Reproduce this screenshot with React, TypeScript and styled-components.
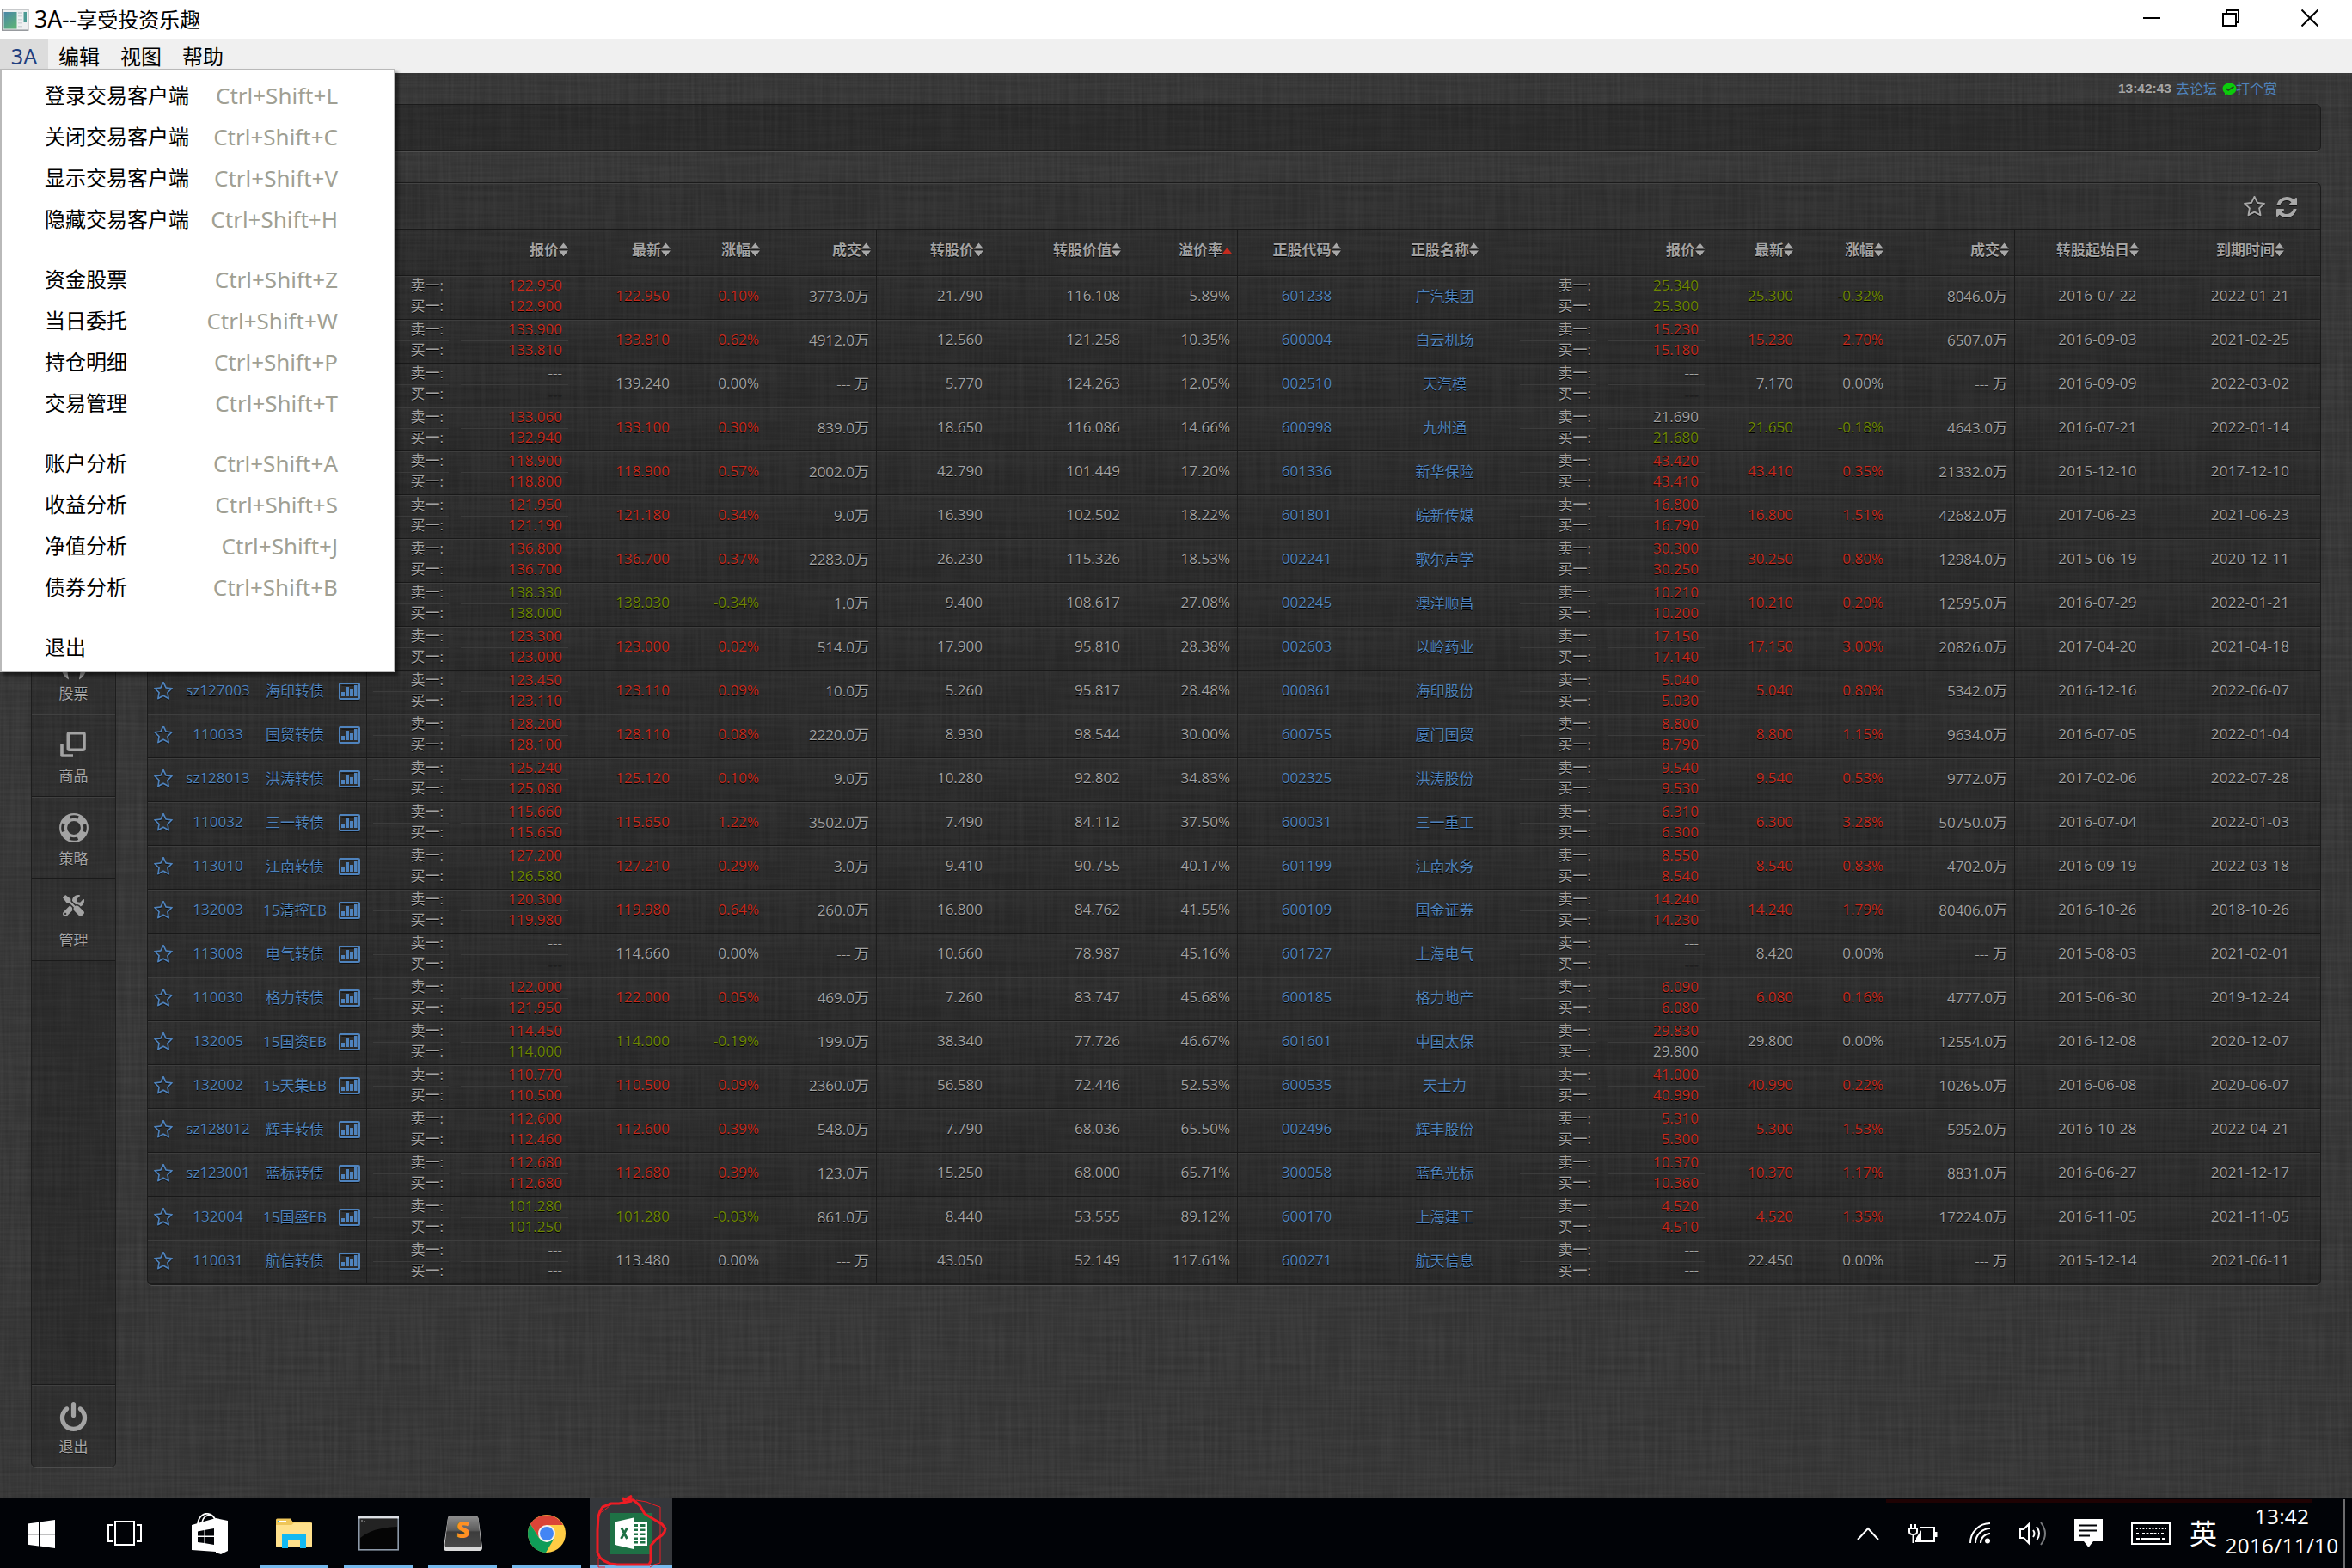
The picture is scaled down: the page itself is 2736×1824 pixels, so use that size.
import React from "react";
import styled, { createGlobalStyle, css } from "styled-components";
import { FaTools } from "react-icons/fa";

const UI = `"Noto Sans", "Noto Sans CJK SC", sans-serif`;
const DATA = `"Open Sans", "Noto Sans CJK SC", sans-serif`;

const RED = "#c42b1e";
const GREEN = "#6e8703";
const GREY = "#a2a2a2";
const BLUE = "#4f83bd";

const weave = (fx: string, fy: string, seed: number) =>
  `url("data:image/svg+xml,${encodeURIComponent(
    `<svg xmlns='http://www.w3.org/2000/svg' width='512' height='512'><filter id='n' x='0' y='0' width='100%' height='100%'><feTurbulence type='fractalNoise' baseFrequency='${fx} ${fy}' numOctaves='2' seed='${seed}' stitchTiles='stitch'/><feColorMatrix values='0 0 0 0 1  0 0 0 0 1  0 0 0 0 1  0.075 0 0 0 -0.022'/></filter><rect width='512' height='512' filter='url(#n)'/></svg>`
  )}")`;

const GlobalStyle = createGlobalStyle`
  * { box-sizing: border-box; }
  html, body { margin: 0; padding: 0; background: #000; }
`;

const Screen = styled.div`
  position: relative;
  display: flex;
  flex-direction: column;
  width: 2736px;
  height: 1824px;
  overflow: hidden;
  font-family: ${UI};
`;

/* ---------- window frame ---------- */

const TitleBar = styled.header`
  display: flex;
  align-items: center;
  justify-content: space-between;
  height: 45px;
  padding: 0 3px 0 2px;
  background: #fff;
  color: #000;
`;

const TitleGroup = styled.div`
  display: flex;
  align-items: center;
  gap: 6px;
  font-size: 24px;
  line-height: 45px;
`;

const TitleText = styled.span`
  white-space: nowrap;
`;

const TitleLatin = styled.span`
  font-size: 26.5px;
`;

const WindowButtons = styled.div`
  display: flex;
  height: 45px;
`;

const WindowButton = styled.div`
  display: flex;
  justify-content: center;
  width: 92px;
  padding-top: 11px;
`;

const MenuBar = styled.nav`
  display: flex;
  height: 40px;
  background: #f0f0f0;
`;

const MenuHead = styled.div<{ $active?: boolean; $w: number }>`
  width: ${(p) => p.$w}px;
  height: 35px;
  text-align: center;
  font-size: ${(p) => (p.$active ? 25 : 24)}px;
  line-height: 41px;
  color: ${(p) => (p.$active ? "#1f3f80" : "#000")};
  background: ${(p) => (p.$active ? "#dcdcdc" : "transparent")};
`;

const Dropdown = styled.div`
  position: absolute;
  left: 0;
  top: 80px;
  z-index: 5;
  width: 460px;
  height: 702px;
  padding: 6px 0 0;
  background: #fff;
  border: 2px solid #b9b9b9;
  box-shadow: 3px 4px 4px rgba(0, 0, 0, 0.5);
`;

const DropItem = styled.div`
  display: flex;
  justify-content: space-between;
  align-items: center;
  height: 48px;
  padding: 0 65px 2px 50px;
  font-size: 24px;
  line-height: 46px;
  color: #000;
`;

const Shortcut = styled.span`
  color: #a09f93;
  font-size: 26px;
`;

const DropRule = styled.div`
  height: 22px;
  padding-top: 8px;
  &::after {
    content: "";
    display: block;
    height: 1px;
    background: #dedede;
  }
`;

/* ---------- client area ---------- */

const Client = styled.div`
  display: flex;
  height: 1658px;
  background-color: #323232;
  background-image: ${weave("0.3", "0.01", 3)}, ${weave("0.01", "0.3", 8)};
`;

const SideColumn = styled.aside`
  display: flex;
  width: 171px;
  padding: 36px 36px 36px 36px;
`;

const SideBar = styled.div`
  display: flex;
  flex-direction: column;
  width: 99px;
  height: 1586px;
  background: rgba(0, 0, 0, 0.2);
  border: 1px solid #1d1d1d;
  border-radius: 6px;
  box-shadow: 0 2px 0 -1px #4c4c4c;
`;

const SideFill = styled.div<{ $h?: number }>`
  ${(p) => (p.$h ? `height: ${p.$h}px;` : "flex: 1;")}
`;

const SideCell = styled.div<{ $top?: boolean }>`
  display: flex;
  flex-direction: column;
  align-items: center;
  height: 95.75px;
  border-bottom: 1px solid #1a1a1a;
  ${(p) => p.$top && "border-bottom: 0; border-top: 1px solid #1a1a1a;"}
  box-shadow: inset 0 2px 0 -1px #414141;
  background: rgba(255, 255, 255, 0.015);
  color: #a6a6a6;
  font-size: 17px;
  line-height: 22px;
  text-shadow: 0 1px 0 #111;
`;

const SideIcon = styled.div`
  display: flex;
  align-items: center;
  justify-content: center;
  height: 60px;
  margin: 6px 0 -5px;
  color: #a3a3a3;
`;

const Main = styled.main`
  display: flex;
  flex-direction: column;
  width: 2529px;
`;

const TopLinks = styled.div`
  display: flex;
  align-items: center;
  justify-content: flex-end;
  height: 36px;
  padding: 0 51px 1px 0;
  color: #a5a5a5;
  font: 16px/35px "Liberation Sans", "Noto Sans CJK SC", sans-serif;
`;

const ClockText = styled.b`
  margin-right: 5px;
  font-size: 15.5px;
`;

const TopLink = styled.a`
  color: ${BLUE};
  font-size: 16px;
  font-family: "Noto Sans CJK SC", sans-serif;
`;

const Badge = styled.span`
  display: flex;
  margin: 1px -1px 0 6px;
`;

const panel = css`
  border: 1px solid #1b1b1b;
  box-shadow: 0 2px 0 -1px #4f4f4f;
`;

const BlankPanel = styled.section`
  ${panel}
  height: 55px;
  margin-bottom: 36px;
  border-radius: 6px;
  background: rgba(0, 0, 0, 0.22);
`;

const TablePanel = styled.section`
  ${panel}
  height: 1283px;
  border-radius: 6px;
  border-bottom-width: 2px;
  background: rgba(0, 0, 0, 0.1);
  overflow: hidden;
`;

const PanelTools = styled.div`
  display: flex;
  align-items: center;
  justify-content: flex-end;
  gap: 13px;
  height: 53px;
  padding: 2px 27px 0 0;
  box-shadow: inset 0 2px 0 -1px #444;
`;

const COLS =
  "35px 93px 86px 41px 102px 140px 118px 104px 129px 131px 160px 129px 160px 161px 103px 127px 103px 105px 145px 192px 163px";

const row = css`
  display: grid;
  grid-template-columns: ${COLS};
  border-top: 1px solid #181818;
  box-shadow: inset 0 2px 0 -1px #3e3e3e;
  font-family: ${DATA};
  font-size: 17px;
  color: ${GREY};
  text-shadow: 0 1px 0 #000;
`;

const HeadRow = styled.div`
  ${row}
  height: 54px;
  font-weight: 700;
  background: linear-gradient(rgba(0, 0, 0, 0.05), rgba(0, 0, 0, 0.13));
`;

const BodyRow = styled.div`
  ${row}
  height: 51px;
  background: linear-gradient(rgba(0, 0, 0, 0.05), rgba(0, 0, 0, 0.14) 70%);
`;

const Cell = styled.div<{
  $align?: "center";
  $edge?: boolean;
  $c?: string;
  $pad?: number;
  $drop?: number;
  $track?: number;
}>`
  display: flex;
  align-items: center;
  justify-content: ${(p) => p.$align || "flex-end"};
  padding: 0 ${(p) => (p.$align ? 0 : p.$pad ?? 8)}px ${(p) => p.$drop ?? 6}px 0;
  border-right: ${(p) => (p.$edge ? "1px solid #1b1b1b" : "0")};
  color: ${(p) => p.$c || "inherit"};
  letter-spacing: ${(p) => p.$track || 0}px;
  white-space: pre;
`;

const Pair = styled.div<{ $label?: boolean }>`
  display: flex;
  flex-direction: column;
  margin-right: 8px;
  margin-left: 7px;
  ${(p) => p.$label && "margin-right: 7px;"}
`;

const PairLine = styled.div<{ $c?: string; $label?: boolean }>`
  height: 24px;
  line-height: 21px;
  text-align: right;
  padding-right: ${(p) => (p.$label ? 6 : 7)}px;
  color: ${(p) => p.$c || "inherit"};
  & + & {
    line-height: 19px;
    border-top: 1px solid #3c3c3c;
  }
`;

const SortGlyph = styled.svg`
  margin-top: 2px;
  filter: drop-shadow(0 1px 0 #111);
`;

/* ---------- taskbar ---------- */

const TaskBar = styled.footer`
  display: flex;
  justify-content: space-between;
  height: 81px;
  background: #010307;
  color: #fff;
`;

const TaskGroup = styled.div`
  display: flex;
`;

const TaskSlot = styled.div<{ $w?: number; $run?: boolean; $front?: boolean }>`
  position: relative;
  display: flex;
  align-items: center;
  justify-content: center;
  width: ${(p) => p.$w || 98}px;
  height: 81px;
  ${(p) => p.$front && "margin: 0 1px; width: 96px; background: #35373b;"}
  &::after {
    content: "";
    display: ${(p) => (p.$run || p.$front ? "block" : "none")};
    position: absolute;
    bottom: 0;
    left: ${(p) => (p.$front ? 0 : 9)}px;
    right: ${(p) => (p.$front ? 0 : 9)}px;
    height: 4px;
    background: #76b9ed;
  }
`;

const Tray = styled.div`
  position: relative;
  display: flex;
  align-items: center;
  padding-right: 8px;
  &::before {
    content: "";
    position: absolute;
    top: 1px;
    left: 34px;
    width: 496px;
    height: 4px;
    background: #1e0203;
  }
`;

const TrayIcon = styled.div<{ $ml: number }>`
  display: flex;
  margin-left: ${(p) => p.$ml}px;
`;

const Ime = styled.span`
  margin: 0 0 4px 22px;
  font: 32px/40px "Noto Sans CJK SC", sans-serif;
`;

const TrayClock = styled.div`
  display: flex;
  flex-direction: column;
  width: 139px;
  margin: 0 2px 6px 6px;
  text-align: center;
  font: 24.3px/34px "Open Sans", sans-serif;
  letter-spacing: 0.3px;
`;

const TrayEdge = styled.div`
  align-self: stretch;
  width: 2px;
  margin-top: 1px;
  background: #6c6c6e;
`;

const Scribble = styled.svg`
  position: absolute;
  left: 686px;
  top: 1736px;
  z-index: 4;
`;

/* ---------- icons ---------- */

const Star = ({ size = 22, color = BLUE, dy = 0 }: { size?: number; color?: string; dy?: number }) => (
  <svg width={size} height={size} viewBox="64 64 1664 1664" style={{ marginTop: dy, filter: "drop-shadow(0 1px 0 #111)" }}>
    <path
      fill={color}
      d="M1201 1004l306-297-422-62-189-382-189 382-422 62 306 297-73 421 378-199 377 199zm527-357q0 22-26 48l-363 354 86 500q1 7 1 20 0 50-41 50-19 0-40-12l-449-236-449 236q-22 12-40 12-21 0-31.5-14.5t-10.5-35.5q0-6 2-20l86-500-364-354q-25-27-25-48 0-37 56-46l502-73 225-455q19-41 49-41t49 41l225 455 502 73q56 9 56 46z"
    />
  </svg>
);

const Refresh = () => (
  <svg width="24" height="24" viewBox="128 128 1536 1536" style={{ filter: "drop-shadow(0 1px 0 #111)" }}>
    <path
      fill="#a8a8a8"
      d="M1639 1056q0 5-1 7-64 268-268 434.5t-478 166.5q-146 0-282.5-55t-243.5-157l-129 129q-19 19-45 19t-45-19-19-45v-448q0-26 19-45t45-19h448q26 0 45 19t19 45-19 45l-137 137q71 66 161 102t187 36q134 0 250-65t186-179q11-17 53-117 8-23 30-23h192q13 0 22.5 9.5t9.5 22.5zm25-800v448q0 26-19 45t-45 19h-448q-26 0-45-19t-19-45 19-45l138-138q-148-137-349-137-134 0-250 65t-186 179q-11 17-53 117-8 23-30 23h-199q-13 0-22.5-9.5t-9.5-22.5v-7q65-268 270-434.5t480-166.5q146 0 284 55.5t245 156.5l130-129q19-19 45-19t45 19 19 45z"
    />
  </svg>
);

const Power = () => (
  <svg width="33" height="34" viewBox="128 0 1536 1664" style={{ marginTop: 2 }}>
    <path
      fill="#a3a3a3"
      d="M1664 896q0 156-61 298t-164 245-245 164-298 61-298-61-245-164-164-245-61-298q0-182 80.5-343t226.5-270q43-32 95.5-25t83.5 50q32 42 24.5 94.5t-49.5 84.5q-98 74-151.5 181t-53.5 228q0 104 40.5 198.5t109.5 163.5 163.5 109.5 198.5 40.5 198.5-40.5 163.5-109.5 109.5-163.5 40.5-198.5q0-121-53.5-228t-151.5-181q-42-32-49.5-84.5t24.5-94.5q31-43 84-50t95 25q146 109 226.5 270t80.5 343zm-640-768v640q0 52-38 90t-90 38-90-38-38-90v-640q0-52 38-90t90-38 90 38 38 90z"
    />
  </svg>
);

const ChartIcon = () => (
  <svg width="25" height="21" viewBox="0 0 25 21" style={{ marginTop: 4 }}>
    <path d="M1 20.5h23M3.5 3.2h18" stroke="#111" />
    <rect x="1" y="1" width="23" height="18" rx="1" fill="none" stroke={BLUE} strokeWidth="2" />
    <path d="M3 11h4v5H3zM8 5h4v11H8zM13 8h4v8h-4zM18 3h3.5v13H18z" fill={BLUE} />
  </svg>
);

const LifeRing = () => (
  <svg width="34" height="34" viewBox="0 0 34 34">
    <circle cx="17" cy="17" r="12.4" fill="none" stroke="#a3a3a3" strokeWidth="9" />
    <circle
      cx="17"
      cy="17"
      r="13"
      fill="none"
      stroke="#2d2d2d"
      strokeWidth="3.6"
      strokeDasharray="9.4 11.02"
      strokeDashoffset="4.7"
    />
  </svg>
);

const Layers = () => (
  <svg width="31" height="31" viewBox="0 0 31 31" fill="none" stroke="#a3a3a3" strokeWidth="3.6" strokeLinejoin="round">
    <rect x="9.3" y="1.8" width="18.7" height="19.5" rx="1.5" />
    <path d="M2 14.5V28H15" />
  </svg>
);

const StockGlyph = () => (
  <svg width="32" height="34" viewBox="0 0 32 34" style={{ marginTop: 5 }}>
    <path d="M1 14C1 24 3 29 10 33.500C9 28 8 24 8 14zM31 14C31 24 29 29 22 33.500C23 28 24 24 24 14z" fill="#a3a3a3" />
  </svg>
);

const Sort = ({ up }: { up?: boolean }) => (
  <SortGlyph width="11" height="17" viewBox="0 0 11 17">
    {up ? (
      <path d="M5.500 6L11 13H0z" fill={RED} />
    ) : (
      <path d="M5.500 0.500L11 7.500H0zM5.500 16.500L0 9.500H11z" fill="#a8a8a8" />
    )}
  </SortGlyph>
);

const AppIcon = () => (
  <svg width="32" height="26" viewBox="0 0 32 26">
    <defs>
      <linearGradient id="app" x1="0" y1="0" x2="0.6" y2="1">
        <stop offset="0" stopColor="#4a86a8" />
        <stop offset="1" stopColor="#5cb07a" />
      </linearGradient>
    </defs>
    <rect x="0.700" y="0.700" width="30" height="24.500" fill="#eef0f1" stroke="#8c9094" strokeWidth="1.400" />
    <rect x="2.500" y="4" width="15" height="19.500" fill="url(#app)" />
    <path d="M19 4h5v2h-5zM19 8h5v1.500h-5zM19 12h5v1.500h-5zM19 16h5v1.500h-5zM19 20h5v1.500h-5z" fill="#cfd4d8" />
    <rect x="25.500" y="4" width="3.500" height="12" fill="#4b9a93" />
  </svg>
);

/* ---------- data: leading r / g marks a rising or falling figure ---------- */

const ROWS = `
|||r122.950|r122.900|r122.950|r0.10%|3773.0|21.790|116.108|5.89%|601238|广汽集团|g25.340|g25.300|g25.300|g-0.32%|8046.0|2016-07-22|2022-01-21
|||r133.900|r133.810|r133.810|r0.62%|4912.0|12.560|121.258|10.35%|600004|白云机场|r15.230|r15.180|r15.230|r2.70%|6507.0|2016-09-03|2021-02-25
|||---|---|139.240|0.00%|--- |5.770|124.263|12.05%|002510|天汽模|---|---|7.170|0.00%|--- |2016-09-09|2022-03-02
|||r133.060|r132.940|r133.100|r0.30%|839.0|18.650|116.086|14.66%|600998|九州通|21.690|g21.680|g21.650|g-0.18%|4643.0|2016-07-21|2022-01-14
|||r118.900|r118.800|r118.900|r0.57%|2002.0|42.790|101.449|17.20%|601336|新华保险|r43.420|r43.410|r43.410|r0.35%|21332.0|2015-12-10|2017-12-10
|||r121.950|r121.190|r121.180|r0.34%|9.0|16.390|102.502|18.22%|601801|皖新传媒|r16.800|r16.790|r16.800|r1.51%|42682.0|2017-06-23|2021-06-23
|||r136.800|r136.700|r136.700|r0.37%|2283.0|26.230|115.326|18.53%|002241|歌尔声学|r30.300|r30.250|r30.250|r0.80%|12984.0|2015-06-19|2020-12-11
|||g138.330|g138.000|g138.030|g-0.34%|1.0|9.400|108.617|27.08%|002245|澳洋顺昌|r10.210|r10.200|r10.210|r0.20%|12595.0|2016-07-29|2022-01-21
|||r123.300|r123.000|r123.000|r0.02%|514.0|17.900|95.810|28.38%|002603|以岭药业|r17.150|r17.140|r17.150|r3.00%|20826.0|2017-04-20|2021-04-18
|sz127003|海印转债|r123.450|r123.110|r123.110|r0.09%|10.0|5.260|95.817|28.48%|000861|海印股份|r5.040|r5.030|r5.040|r0.80%|5342.0|2016-12-16|2022-06-07
|110033|国贸转债|r128.200|r128.100|r128.110|r0.08%|2220.0|8.930|98.544|30.00%|600755|厦门国贸|r8.800|r8.790|r8.800|r1.15%|9634.0|2016-07-05|2022-01-04
|sz128013|洪涛转债|r125.240|r125.080|r125.120|r0.10%|9.0|10.280|92.802|34.83%|002325|洪涛股份|r9.540|r9.530|r9.540|r0.53%|9772.0|2017-02-06|2022-07-28
|110032|三一转债|r115.660|r115.650|r115.650|r1.22%|3502.0|7.490|84.112|37.50%|600031|三一重工|r6.310|r6.300|r6.300|r3.28%|50750.0|2016-07-04|2022-01-03
|113010|江南转债|r127.200|g126.580|r127.210|r0.29%|3.0|9.410|90.755|40.17%|601199|江南水务|r8.550|r8.540|r8.540|r0.83%|4702.0|2016-09-19|2022-03-18
|132003|15清控EB|r120.300|r119.980|r119.980|r0.64%|260.0|16.800|84.762|41.55%|600109|国金证券|r14.240|r14.230|r14.240|r1.79%|80406.0|2016-10-26|2018-10-26
|113008|电气转债|---|---|114.660|0.00%|--- |10.660|78.987|45.16%|601727|上海电气|---|---|8.420|0.00%|--- |2015-08-03|2021-02-01
|110030|格力转债|r122.000|r121.950|r122.000|r0.05%|469.0|7.260|83.747|45.68%|600185|格力地产|r6.090|r6.080|r6.080|r0.16%|4777.0|2015-06-30|2019-12-24
|132005|15国资EB|r114.450|g114.000|g114.000|g-0.19%|199.0|38.340|77.726|46.67%|601601|中国太保|r29.830|29.800|29.800|0.00%|12554.0|2016-12-08|2020-12-07
|132002|15天集EB|r110.770|r110.500|r110.500|r0.09%|2360.0|56.580|72.446|52.53%|600535|天士力|r41.000|r40.990|r40.990|r0.22%|10265.0|2016-06-08|2020-06-07
|sz128012|辉丰转债|r112.600|r112.460|r112.600|r0.39%|548.0|7.790|68.036|65.50%|002496|辉丰股份|r5.310|r5.300|r5.300|r1.53%|5952.0|2016-10-28|2022-04-21
|sz123001|蓝标转债|r112.680|r112.680|r112.680|r0.39%|123.0|15.250|68.000|65.71%|300058|蓝色光标|r10.370|r10.360|r10.370|r1.17%|8831.0|2016-06-27|2021-12-17
|132004|15国盛EB|g101.280|g101.250|g101.280|g-0.03%|861.0|8.440|53.555|89.12%|600170|上海建工|r4.520|r4.510|r4.520|r1.35%|17224.0|2016-11-05|2021-11-05
|110031|航信转债|---|---|113.480|0.00%|--- |43.050|52.149|117.61%|600271|航天信息|---|---|22.450|0.00%|--- |2015-12-14|2021-06-11`
  .trim()
  .split("\n")
  .map((l) => l.split("|").slice(1));

const tone = (s: string) => (s[0] === "r" ? RED : s[0] === "g" ? GREEN : GREY);
const bare = (s: string) => s.replace(/^[rg]/, "");

const Quote = ({ ask, bid }: { ask: string; bid: string }) => (
  <>
    <Pair $label>
      <PairLine $label>卖一:</PairLine>
      <PairLine $label>买一:</PairLine>
    </Pair>
    <Pair>
      <PairLine $c={tone(ask)}>{bare(ask)}</PairLine>
      <PairLine $c={tone(bid)}>{bare(bid)}</PairLine>
    </Pair>
  </>
);

const BondRow = ({ d }: { d: string[] }) => (
  <BodyRow>
    <Cell $align="center">
      <Star dy={3} />
    </Cell>
    <Cell $align="center" $c={BLUE}>
      {d[0]}
    </Cell>
    <Cell $align="center" $c={BLUE}>
      {d[1]}
    </Cell>
    <Cell $align="center" $edge>
      <ChartIcon />
    </Cell>
    <Quote ask={d[2]} bid={d[3]} />
    <Cell $c={tone(d[4])}>{bare(d[4])}</Cell>
    <Cell $c={tone(d[5])}>{bare(d[5])}</Cell>
    <Cell $edge $pad={8}>{d[6]}万</Cell>
    <Cell>{d[7]}</Cell>
    <Cell>{d[8]}</Cell>
    <Cell $edge $pad={8}>{d[9]}</Cell>
    <Cell $align="center" $c={BLUE}>
      {d[10]}
    </Cell>
    <Cell $align="center" $c={BLUE}>
      {d[11]}
    </Cell>
    <Quote ask={d[12]} bid={d[13]} />
    <Cell $c={tone(d[14])}>{bare(d[14])}</Cell>
    <Cell $c={tone(d[15])}>{bare(d[15])}</Cell>
    <Cell $edge $pad={8}>{d[16]}万</Cell>
    <Cell $align="center" $track={0.3}>
      {d[17]}
    </Cell>
    <Cell $align="center" $track={0.3}>
      {d[18]}
    </Cell>
  </BodyRow>
);

const Head = ({ t, ...rest }: { t: string; $align?: "center"; $edge?: boolean; $pad?: number }) => (
  <Cell {...rest} $drop={8}>
    {t}
    <Sort up={t === "溢价率"} />
  </Cell>
);

const MENU: (string[] | null)[] = [
  ["登录交易客户端", "L"],
  ["关闭交易客户端", "C"],
  ["显示交易客户端", "V"],
  ["隐藏交易客户端", "H"],
  null,
  ["资金股票", "Z"],
  ["当日委托", "W"],
  ["持仓明细", "P"],
  ["交易管理", "T"],
  null,
  ["账户分析", "A"],
  ["收益分析", "S"],
  ["净值分析", "J"],
  ["债券分析", "B"],
  null,
  ["退出", ""],
];

const TaskIcons = () => (
  <TaskGroup>
    <TaskSlot $w={96}>
      <svg width="32" height="33" viewBox="0 0 32 33" style={{ marginTop: 2 }}>
        <path d="M0 4.500L13 2.700V16H0zM14.200 2.500L32 0v16H14.200zM0 17.200H13V30.500L0 28.700zM14.200 17.200H32V33L14.200 30.600z" fill="#fff" />
      </svg>
    </TaskSlot>
    <TaskSlot $w={98}>
      <svg width="40" height="29" viewBox="0 0 40 29" fill="none" stroke="#fff" strokeWidth="2">
        <path d="M9 1H31V28H9zM6 5H1V24H6M34 5H39V24H34" />
      </svg>
    </TaskSlot>
    <TaskSlot $w={99}>
      <svg width="42" height="48" viewBox="0 0 42 48">
        <path d="M7 13C8 3 15 0 19 1C25 2 27 6 28 10M12 12C13 4 18 2 22 3" fill="none" stroke="#fff" strokeWidth="1.800" />
        <path d="M0 14L28 6V45L0 43zM28 6L42 9V44L34 48L28 46z" fill="#fff" />
        <path d="M7 21.500L14.500 20v6.500H7zM16 19.800L26 18v8.500H16zM7 28h7.500v7L7 34zM16 28h10v9l-10-1.700z" fill="#010307" />
      </svg>
    </TaskSlot>
    <TaskSlot $run>
      <svg width="42" height="36" viewBox="0 0 42 36">
        <path d="M0 2Q0 0.500 1.500 0.500H17L20 5H40Q42 5 42 7V32Q42 34 40 34H2Q0 34 0 32z" fill="#efc65a" />
        <path d="M0 8H18L21 5.500H42V32Q42 34 40 34H2Q0 34 0 32z" fill="#ffe18c" />
        <path d="M2 3H12V5H2z" fill="#fff" />
        <path d="M2 3H4V5H2z" fill="#22b5ea" />
        <path d="M7 19Q7 18 8 18H34Q35 18 35 19V35H28V25H14V35H7z" fill="#12b9f2" />
      </svg>
    </TaskSlot>
    <TaskSlot $run>
      <svg width="47" height="40" viewBox="0 0 47 40">
        <rect x="0.800" y="0.800" width="45.400" height="38" fill="#050505" stroke="#8d99a8" strokeWidth="1.600" />
        <path d="M0 0H47V2.500H0z" fill="#dcdfe4" />
        <path d="M2 3H45V12Q16 13 2 25z" fill="#232323" />
        <path d="M3 5h2M6 6h2" stroke="#aaa" />
      </svg>
    </TaskSlot>
    <TaskSlot $run>
      <svg width="45" height="40" viewBox="0 0 45 40">
        <defs>
          <linearGradient id="subl" x1="0" y1="0" x2="0" y2="1">
            <stop offset="0" stopColor="#8d8d8d" />
            <stop offset="0.450" stopColor="#5c5c5c" />
            <stop offset="0.500" stopColor="#3c3c3c" />
            <stop offset="1" stopColor="#4a4a4a" />
          </linearGradient>
        </defs>
        <path d="M5 2Q5 0 7 0H38Q40 0 40.500 2L45 36Q45 40 42 40H3Q0 40 0 36z" fill="#dadada" />
        <path d="M5 2Q5 0 7 0H38Q40 0 40.500 2L43.500 33Q43.500 36 41 36H4Q1.500 36 1.500 33z" fill="url(#subl)" />
        <text x="22.500" y="25" textAnchor="middle" fontFamily="Open Sans, sans-serif" fontWeight="800" fontSize="27" fill="#ff9022">
          S
        </text>
      </svg>
    </TaskSlot>
    <TaskSlot $run>
      <svg width="44" height="44" viewBox="0 0 44 44">
        <circle cx="22" cy="22" r="22" fill="#fc4" />
        <path d="M22 12H41A22 22 0 0 0 3 11L13 27z" fill="#db4437" />
        <path d="M3 11A22 22 0 0 0 21 44L31 27L22 32L13 27z" fill="#0f9d58" />
        <circle cx="22" cy="22" r="10" fill="#f1f1f1" />
        <circle cx="22" cy="22" r="8" fill="#4285f4" />
      </svg>
    </TaskSlot>
    <TaskSlot $front>
      <svg width="48" height="48" viewBox="0 0 48 48">
        <rect width="48" height="48" fill="#1e7145" />
        <path d="M5 10.500L27 5.500V42L5 37z" fill="#fff" />
        <path d="M27 10H43V38H27" fill="#fff" />
        <path d="M28 13h4v3h-4zM34.500 13h6v3h-6zM28 18.500h4v2.500h-4zM34.500 18.500h6v2.500h-6zM28 23.500h4v2.500h-4zM34.500 23.500h6v2.500h-6zM28 28.500h4v2.500h-4zM34.500 28.500h6v2.500h-6zM28 33h4v2.500h-4zM34.500 33h6v2.500h-6z" fill="#1e7145" />
        <path d="M13 17.500L19.500 30M19.500 17.500L12.500 30" stroke="#1e7145" strokeWidth="2.800" />
      </svg>
    </TaskSlot>
  </TaskGroup>
);

const TrayArea = () => (
  <Tray>
    <TrayIcon $ml={0}>
      <svg width="26" height="16" viewBox="0 0 26 16">
        <path d="M1 15L13 2L25 15" fill="none" stroke="#fff" strokeWidth="2" />
      </svg>
    </TrayIcon>
    <TrayIcon $ml={34}>
      <svg width="34" height="24" viewBox="0 0 34 24" fill="none" stroke="#fff" strokeWidth="2">
        <path d="M14 5H30V21H8M3 1V6M8 1V6M1 6H10V10Q10 13 5.500 13Q1 13 1 10zM5.500 13V23" />
        <path d="M9 20V17L15 8V20z" fill="#fff" stroke="none" />
        <path d="M32 10V16" strokeWidth="3" />
      </svg>
    </TrayIcon>
    <TrayIcon $ml={37}>
      <svg width="25" height="25" viewBox="0 0 25 25" fill="none" stroke="#fff" strokeWidth="2">
        <path d="M1 24A23 23 0 0 1 24 1M7 24A17 17 0 0 1 24 7M13 24A11 11 0 0 1 24 13" />
        <circle cx="21" cy="21.500" r="3" fill="#fff" stroke="none" />
      </svg>
    </TrayIcon>
    <TrayIcon $ml={33}>
      <svg width="33" height="30" viewBox="0 0 33 30" fill="none" stroke="#fff" strokeWidth="2">
        <path d="M1 10H5L11 4V26L5 20H1z" />
        <path d="M16 11Q19 15 16 19M20 7Q26 15 20 23" />
        <path d="M25 2Q35 15 25 28" stroke="#77797c" />
      </svg>
    </TrayIcon>
    <TrayIcon $ml={31}>
      <svg width="33" height="33" viewBox="0 0 33 33">
        <path d="M0 0H33V26H22L16.500 33L11 26H0z" fill="#fff" />
        <path d="M6 7.500H26M6 13.500H26M6 19.500H18" stroke="#010307" strokeWidth="2" />
      </svg>
    </TrayIcon>
    <TrayIcon $ml={33}>
      <svg width="46" height="26" viewBox="0 0 46 26" fill="none" stroke="#fff" strokeWidth="2">
        <path d="M1 1H45V25H1z" />
        <path d="M6 7H41" strokeDasharray="2 1.700" />
        <path d="M6 13H10M13 13H33M35 13H40" strokeDasharray="3 1.500" />
        <path d="M6 19H10M12 19H34M36 19H40" />
      </svg>
    </TrayIcon>
    <Ime>英</Ime>
    <TrayClock>
      <span>13:42</span>
      <span>2016/11/10</span>
    </TrayClock>
    <TrayEdge />
  </Tray>
);

export default function App() {
  return (
    <Screen>
      <GlobalStyle />
      <TitleBar>
        <TitleGroup>
          <AppIcon />
          <TitleText>
            <TitleLatin>3A--</TitleLatin>享受投资乐趣
          </TitleText>
        </TitleGroup>
        <WindowButtons>
          <WindowButton>
            <svg width="20" height="20">
              <path d="M0 10H20" stroke="#000" strokeWidth="2" />
            </svg>
          </WindowButton>
          <WindowButton>
            <svg width="20" height="20" fill="none" stroke="#000" strokeWidth="2">
              <path d="M1 5H16V19H1zM5 5V1H19V15H16" />
            </svg>
          </WindowButton>
          <WindowButton>
            <svg width="20" height="20">
              <path d="M0.500 0.500L19.500 19.500M19.500 0.500L0.500 19.500" stroke="#000" strokeWidth="2" />
            </svg>
          </WindowButton>
        </WindowButtons>
      </TitleBar>
      <MenuBar>
        <MenuHead $active $w={56}>3A</MenuHead>
        <MenuHead $w={72}>编辑</MenuHead>
        <MenuHead $w={72}>视图</MenuHead>
        <MenuHead $w={72}>帮助</MenuHead>
      </MenuBar>
      <Dropdown>
        {MENU.map((m, i) =>
          m ? (
            <DropItem key={i}>
              <span>{m[0]}</span>
              {m[1] && <Shortcut>Ctrl+Shift+{m[1]}</Shortcut>}
            </DropItem>
          ) : (
            <DropRule key={i} />
          )
        )}
      </Dropdown>

      <Client>
        <SideColumn>
          <SideBar>
            <SideFill $h={613} />
            <SideCell>
              <SideIcon>
                <StockGlyph />
              </SideIcon>
              股票
            </SideCell>
            <SideCell>
              <SideIcon>
                <Layers />
              </SideIcon>
              商品
            </SideCell>
            <SideCell>
              <SideIcon>
                <LifeRing />
              </SideIcon>
              策略
            </SideCell>
            <SideCell>
              <SideIcon>
                <FaTools size={25} style={{ marginTop: -9 }} />
              </SideIcon>
              管理
            </SideCell>
            <SideFill />
            <SideCell $top>
              <SideIcon>
                <Power />
              </SideIcon>
              退出
            </SideCell>
          </SideBar>
        </SideColumn>
        <Main>
          <TopLinks>
            <ClockText>13:42:43</ClockText>
            <TopLink>去论坛</TopLink>
            <Badge>
              <svg width="17" height="15" viewBox="0 0 17 15">
                <path d="M8.500 0.500C13 0.500 16.500 3.500 16.500 7.200S13 14 8.500 14Q7 14 5.600 13.500L3 15V12.200Q0.500 10.200 0.500 7.200C0.500 3.500 4 0.500 8.500 0.500z" fill="#0ccb0c" />
                <path d="M5 7.200L7.200 9L13.500 4.800" fill="none" stroke="#20501c" strokeWidth="1.800" />
              </svg>
            </Badge>
            <TopLink>打个赏</TopLink>
          </TopLinks>
          <BlankPanel />
          <TablePanel>
            <PanelTools>
              <Star size={25} color="#a8a8a8" />
              <Refresh />
            </PanelTools>
            <HeadRow>
              <Cell />
              <Cell />
              <Cell />
              <Cell $edge />
              <Cell />
              <Head t="报价" />
              <Head t="最新" $pad={7} />
              <Head t="涨幅" $pad={7} />
              <Head t="成交" $edge $pad={6} />
              <Head t="转股价" $pad={7} />
              <Head t="转股价值" $pad={7} />
              <Head t="溢价率" $edge $pad={6} />
              <Head t="正股代码" $align="center" />
              <Head t="正股名称" $align="center" />
              <Cell />
              <Head t="报价" />
              <Head t="最新" />
              <Head t="涨幅" />
              <Head t="成交" $edge $pad={6} />
              <Head t="转股起始日" $align="center" />
              <Head t="到期时间" $align="center" />
            </HeadRow>
            {ROWS.map((d, i) => (
              <BondRow key={i} d={d} />
            ))}
          </TablePanel>
        </Main>
      </Client>

      <TaskBar>
        <TaskIcons />
        <TrayArea />
      </TaskBar>
      <Scribble width="100" height="88" viewBox="0 0 100 88" fill="none" stroke="#ee1c24">
        <path
          d="M49 10L34 13L25 13L15 17L12 22L10 28L9 44L9 70L12 76L17 80L24 83L32 84L69 84L71 80L71 62L77 55L84 50L87 46L88 42L84 37L74 31L64 25L58 15L51 9L43 8M49 4L40 9L38 6"
          strokeWidth="3"
        />
        <path d="M10 76V87H18M54 9L66 11L76 15L82 17V82L75 84L70 87M12 24L18 20L24 15" strokeWidth="1" />
      </Scribble>
    </Screen>
  );
}
